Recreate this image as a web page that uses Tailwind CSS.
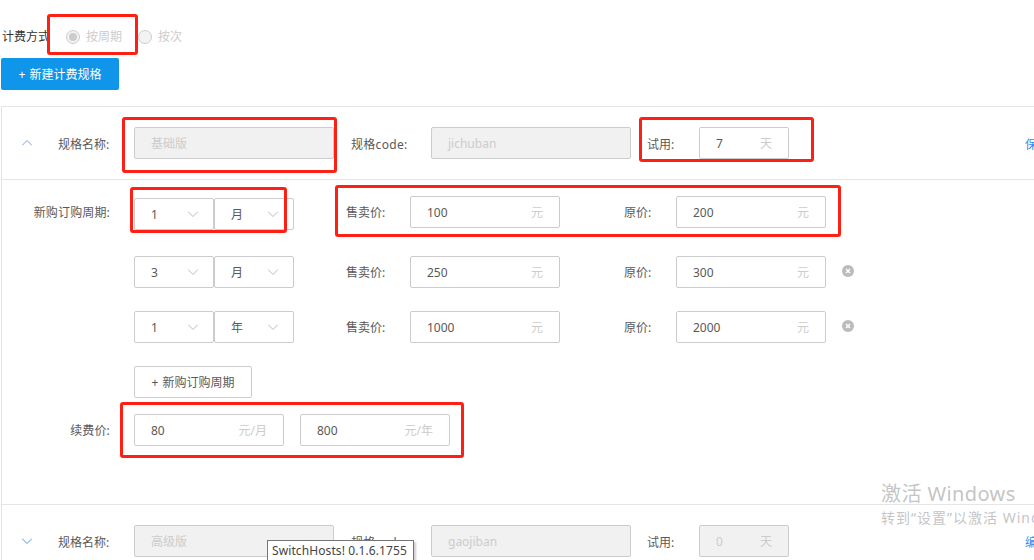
<!DOCTYPE html>
<html lang="zh-CN"><head><meta charset="utf-8">
<script src="https://cdn.jsdelivr.net/npm/@tailwindcss/browser@4"></script>
<title>计费规格</title></head>
<body class="relative w-[1034px] h-[560px] overflow-hidden bg-white text-[12px] leading-[20px] text-[#595959] font-['Noto_Sans','Noto_Sans_CJK_SC',sans-serif]">

<!-- billing mode -->
<div class="flex items-center h-[20px] mt-[27px]">
  <span class="w-[66px] pl-[2px] whitespace-nowrap text-[#333]">计费方式</span>
  <span class="w-[14px] h-[14px] rounded-full border border-[#ccc] bg-[#f3f3f3] flex items-center justify-center"><span class="w-[8px] h-[8px] rounded-full bg-[#ccc]"></span></span>
  <span class="ml-[6px] w-[52px] text-[#ccc]">按周期</span>
  <span class="w-[14px] h-[14px] rounded-full border border-[#ccc] bg-[#f3f3f3]"></span>
  <span class="ml-[6px] text-[#ccc]">按次</span>
</div>
<button class="block ml-[1px] mt-[11px] w-[118px] h-[32px] pt-[2px] rounded-[2px] bg-[#0f96eb] text-white text-center [word-spacing:1px]">+ 新建计费规格</button>

<!-- panel 1 -->
<div class="ml-[1px] mt-[16px] w-[1033px] border-t border-l border-[#e5e5e5]">
  <div class="flex items-center h-[73px] border-b border-[#e5e5e5] whitespace-nowrap">
    <div class="w-[132px] shrink-0 flex items-center pl-[20px]">
      <svg class="w-[10px] h-[6px]" viewBox="0 0 10 6" fill="none" stroke="#7d9fdd" stroke-width="1"><path d="M0 5.5 L5 .5 L10 5.5"/></svg>
      <span class="ml-[26px] pt-[3px]">规格名称:</span>
    </div>
    <div class="w-[200px] shrink-0 h-[32px] rounded-[2px] border border-[#ccc] bg-[#f1f1f1] pl-[16px] pt-[2px] flex items-center text-[#ccc]">基础版</div>
    <span class="ml-[17px] w-[80px] shrink-0 pt-[3px] tracking-[0.3px]">规格code:</span>
    <div class="w-[200px] shrink-0 h-[32px] rounded-[2px] border border-[#ccc] bg-[#f1f1f1] pl-[16px] pt-[2px] flex items-center text-[#ccc]">jichuban</div>
    <span class="ml-[16px] w-[52px] shrink-0 pt-[3px]">试用:</span>
    <div class="w-[90px] shrink-0 h-[32px] rounded-[2px] border border-[#ccc] pl-[16px] pr-[16px] pt-[2px] flex items-center justify-between"><span>7</span><span class="text-[#ccc]">天</span></div>
    <span class="ml-[236px] shrink-0 pt-[3px] text-[#2d8cf0]">保存</span>
  </div>

  <div class="h-[324px] pt-[18px] whitespace-nowrap">
    <div class="flex items-start h-[32px]">
      <span class="w-[132px] shrink-0 pr-[24px] text-right leading-[30px] tracking-[0.15px]">新购订购周期:</span>
      <div class="w-[80px] shrink-0 h-[32px] rounded-[2px] border border-[#ccc] pl-[16px] pt-[2px] flex items-center relative">1<svg class="absolute left-[53px] top-[12px] w-[10px] h-[6px]" viewBox="0 0 10 6" fill="none" stroke="#bbb"><path d="M0 .5 L5 5.5 L10 .5"/></svg></div>
      <div class="w-[80px] shrink-0 h-[32px] rounded-[2px] border border-[#ccc] pl-[16px] pt-[2px] flex items-center relative">月<svg class="absolute left-[53px] top-[12px] w-[10px] h-[6px]" viewBox="0 0 10 6" fill="none" stroke="#bbb"><path d="M0 .5 L5 5.5 L10 .5"/></svg></div>
      <span class="ml-[52px] w-[64px] shrink-0 leading-[30px]">售卖价:</span>
      <div class="-mt-[2px] w-[150px] shrink-0 h-[32px] rounded-[2px] border border-[#ccc] pl-[16px] pr-[16px] pt-[2px] flex items-center justify-between"><span>100</span><span class="text-[#ccc]">元</span></div>
      <span class="ml-[64px] w-[52px] shrink-0 leading-[30px]">原价:</span>
      <div class="-mt-[2px] w-[150px] shrink-0 h-[32px] rounded-[2px] border border-[#ccc] pl-[16px] pr-[16px] pt-[2px] flex items-center justify-between"><span>200</span><span class="text-[#ccc]">元</span></div>
    </div>

    <div class="flex items-start h-[32px] mt-[26px]">
      <span class="w-[132px] shrink-0"></span>
      <div class="w-[80px] shrink-0 h-[32px] rounded-[2px] border border-[#ccc] pl-[16px] pt-[2px] flex items-center relative">3<svg class="absolute left-[53px] top-[12px] w-[10px] h-[6px]" viewBox="0 0 10 6" fill="none" stroke="#bbb"><path d="M0 .5 L5 5.5 L10 .5"/></svg></div>
      <div class="w-[80px] shrink-0 h-[32px] rounded-[2px] border border-[#ccc] pl-[16px] pt-[2px] flex items-center relative">月<svg class="absolute left-[53px] top-[12px] w-[10px] h-[6px]" viewBox="0 0 10 6" fill="none" stroke="#bbb"><path d="M0 .5 L5 5.5 L10 .5"/></svg></div>
      <span class="ml-[52px] w-[64px] shrink-0 leading-[34px]">售卖价:</span>
      <div class="w-[150px] shrink-0 h-[32px] rounded-[2px] border border-[#ccc] pl-[16px] pr-[16px] pt-[2px] flex items-center justify-between"><span>250</span><span class="text-[#ccc]">元</span></div>
      <span class="ml-[64px] w-[52px] shrink-0 leading-[34px]">原价:</span>
      <div class="w-[150px] shrink-0 h-[32px] rounded-[2px] border border-[#ccc] pl-[16px] pr-[16px] pt-[2px] flex items-center justify-between"><span>300</span><span class="text-[#ccc]">元</span></div>
      <svg class="ml-[16px] mt-[9px] w-[12px] h-[12px]" viewBox="0 0 12 12"><circle cx="6" cy="6" r="6" fill="#bbb"/><path d="M4 4 L8 8 M8 4 L4 8" stroke="#fff" stroke-width="1.5"/></svg>
    </div>

    <div class="flex items-start h-[32px] mt-[23px]">
      <span class="w-[132px] shrink-0"></span>
      <div class="w-[80px] shrink-0 h-[32px] rounded-[2px] border border-[#ccc] pl-[16px] pt-[2px] flex items-center relative">1<svg class="absolute left-[53px] top-[12px] w-[10px] h-[6px]" viewBox="0 0 10 6" fill="none" stroke="#bbb"><path d="M0 .5 L5 5.5 L10 .5"/></svg></div>
      <div class="w-[80px] shrink-0 h-[32px] rounded-[2px] border border-[#ccc] pl-[16px] pt-[2px] flex items-center relative">年<svg class="absolute left-[53px] top-[12px] w-[10px] h-[6px]" viewBox="0 0 10 6" fill="none" stroke="#bbb"><path d="M0 .5 L5 5.5 L10 .5"/></svg></div>
      <span class="ml-[52px] w-[64px] shrink-0 leading-[34px]">售卖价:</span>
      <div class="w-[150px] shrink-0 h-[32px] rounded-[2px] border border-[#ccc] pl-[16px] pr-[16px] pt-[2px] flex items-center justify-between"><span>1000</span><span class="text-[#ccc]">元</span></div>
      <span class="ml-[64px] w-[52px] shrink-0 leading-[34px]">原价:</span>
      <div class="w-[150px] shrink-0 h-[32px] rounded-[2px] border border-[#ccc] pl-[16px] pr-[16px] pt-[2px] flex items-center justify-between"><span>2000</span><span class="text-[#ccc]">元</span></div>
      <svg class="ml-[16px] mt-[9px] w-[12px] h-[12px]" viewBox="0 0 12 12"><circle cx="6" cy="6" r="6" fill="#bbb"/><path d="M4 4 L8 8 M8 4 L4 8" stroke="#fff" stroke-width="1.5"/></svg>
    </div>

    <button class="block ml-[132px] mt-[23px] w-[118px] h-[32px] pt-[2px] rounded-[2px] border border-[#ccc] bg-white text-center [word-spacing:1px]">+ 新购订购周期</button>

    <div class="flex items-start h-[32px] mt-[16px]">
      <span class="w-[132px] shrink-0 pr-[24px] text-right leading-[34px] tracking-[0.15px]">续费价:</span>
      <div class="w-[150px] shrink-0 h-[32px] rounded-[2px] border border-[#ccc] pl-[16px] pr-[16px] pt-[2px] flex items-center justify-between"><span>80</span><span class="text-[#ccc]">元/月</span></div>
      <div class="ml-[16px] w-[150px] shrink-0 h-[32px] rounded-[2px] border border-[#ccc] pl-[16px] pr-[16px] pt-[2px] flex items-center justify-between"><span>800</span><span class="text-[#ccc]">元/年</span></div>
    </div>
  </div>

  <div class="flex items-center h-[73px] border-t border-[#e5e5e5] whitespace-nowrap">
    <div class="w-[132px] shrink-0 flex items-center pl-[20px]">
      <svg class="w-[10px] h-[6px]" viewBox="0 0 10 6" fill="none" stroke="#4f9be8" stroke-width="1"><path d="M0 .5 L5 5.5 L10 .5"/></svg>
      <span class="ml-[26px] pt-[3px]">规格名称:</span>
    </div>
    <div class="w-[200px] shrink-0 h-[32px] rounded-[2px] border border-[#ccc] bg-[#f1f1f1] pl-[16px] pt-[2px] flex items-center text-[#ccc]">高级版</div>
    <span class="ml-[17px] w-[80px] shrink-0 pt-[3px] tracking-[0.3px]">规格code:</span>
    <div class="w-[200px] shrink-0 h-[32px] rounded-[2px] border border-[#ccc] bg-[#f1f1f1] pl-[16px] pt-[2px] flex items-center text-[#ccc]">gaojiban</div>
    <span class="ml-[16px] w-[52px] shrink-0 pt-[3px]">试用:</span>
    <div class="w-[90px] shrink-0 h-[32px] rounded-[2px] border border-[#ccc] bg-[#f1f1f1] pl-[16px] pr-[16px] pt-[2px] flex items-center justify-between text-[#ccc]"><span>0</span><span>天</span></div>
    <span class="ml-[236px] shrink-0 pt-[3px] text-[#2d8cf0]">编辑</span>
  </div>
</div>

<!-- red annotation boxes drawn over the screenshot -->
<div class="absolute left-[47px] top-[14px] w-[91px] h-[41px] border-[3px] border-[#ff2015] rounded-[3px]"></div>
<div class="absolute left-[122px] top-[117px] w-[215px] h-[56px] border-[3px] border-[#ff2015] rounded-[3px]"></div>
<div class="absolute left-[639px] top-[117px] w-[175px] h-[45px] border-[3px] border-[#ff2015] rounded-[3px]"></div>
<div class="absolute left-[130px] top-[187px] w-[157px] h-[46px] border-[3px] border-[#ff2015] rounded-[3px]"></div>
<div class="absolute left-[335px] top-[185px] w-[506px] h-[52px] border-[3px] border-[#ff2015] rounded-[3px]"></div>
<div class="absolute left-[120px] top-[402px] w-[344px] h-[56px] border-[3px] border-[#ff2015] rounded-[3px]"></div>

<!-- windows watermark -->
<div class="absolute left-[881px] top-[481px] text-[20px] leading-[26px] tracking-[0.4px] text-[#bdbdbd]/90 whitespace-nowrap">激活 Windows</div>
<div class="absolute left-[881px] top-[508px] text-[14px] leading-[20px] tracking-[1px] text-[#bdbdbd]/90 whitespace-nowrap">转到“设置”以激活 Windows。</div>

<!-- tooltip -->
<div class="absolute left-[267px] top-[540px] w-[147px] h-[24px] border border-[#767676] bg-white pl-[4px] leading-[20px] tracking-[0.1px] text-[#444] whitespace-nowrap shadow-[2px_2px_2px_rgba(0,0,0,.2)]">SwitchHosts! 0.1.6.1755</div>
</body></html>
